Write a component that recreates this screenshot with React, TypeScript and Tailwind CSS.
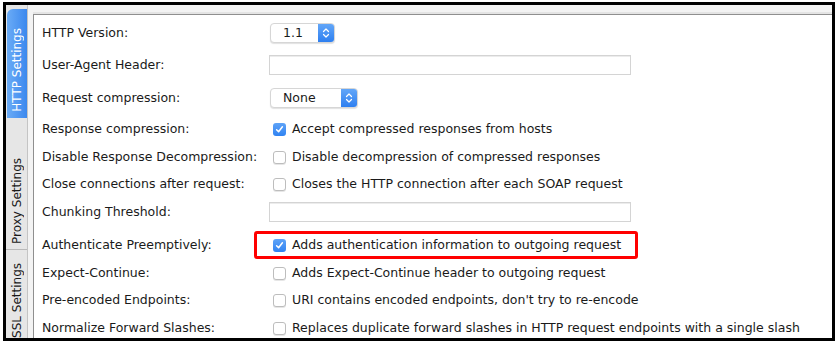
import React from "react";

type Row =
  | { label: string; kind: "select"; value: string; width: string; h: string }
  | { label: string; kind: "field"; h: string }
  | { label: string; kind: "check"; checked: boolean; text: string; h: string; boxed?: boolean };

const rows: Row[] = [
  { label: "HTTP Version:", kind: "select", value: "1.1", width: "w-[65px]", h: "h-[30px]" },
  { label: "User-Agent Header:", kind: "field", h: "h-[34px]" },
  { label: "Request compression:", kind: "select", value: "None", width: "w-[88px]", h: "h-[32px]" },
  { label: "Response compression:", kind: "check", checked: true, text: "Accept compressed responses from hosts", h: "h-[30px]" },
  { label: "Disable Response Decompression:", kind: "check", checked: false, text: "Disable decompression of compressed responses", h: "h-[27px]" },
  { label: "Close connections after request:", kind: "check", checked: false, text: "Closes the HTTP connection after each SOAP request", h: "h-[27px]" },
  { label: "Chunking Threshold:", kind: "field", h: "h-[28px]" },
  { label: "Authenticate Preemptively:", kind: "check", checked: true, text: "Adds authentication information to outgoing request", h: "h-[27px] mt-[6px]", boxed: true },
  { label: "Expect-Continue:", kind: "check", checked: false, text: "Adds Expect-Continue header to outgoing request", h: "h-[28px]" },
  { label: "Pre-encoded Endpoints:", kind: "check", checked: false, text: "URI contains encoded endpoints, don't try to re-encode", h: "h-[27px]" },
  { label: "Normalize Forward Slashes:", kind: "check", checked: false, text: "Replaces duplicate forward slashes in HTTP request endpoints with a single slash", h: "h-[28px]" },
];

function Checkbox({ checked }: { checked: boolean }) {
  if (checked) {
    return (
      <div className="ml-[3px] w-[13px] h-[13px] rounded-[3px] bg-gradient-to-b from-[#5ea3f7] to-[#2f83f2] flex items-center justify-center shrink-0">
        <svg width="9" height="9" viewBox="0 0 9 9">
          <path d="M1.6 4.8 L3.6 6.8 L7.4 1.8" fill="none" stroke="white" strokeWidth="1.5" strokeLinecap="round" strokeLinejoin="round" />
        </svg>
      </div>
    );
  }
  return <div className="ml-[3px] w-[13px] h-[13px] rounded-[3px] bg-white border border-[#bdbdbd] shadow-[0_1px_0_#e6e6e6] shrink-0" />;
}

function Select({ value, width }: { value: string; width: string }) {
  return (
    <div className={`${width} h-[20px] flex rounded-[4px] bg-white border border-[#d6d6d6] shadow-[0_1px_1px_rgba(0,0,0,0.12)] overflow-hidden`}>
      <span className="flex-1 pl-[12px] leading-[18px]">{value}</span>
      <div className="w-[16px] bg-gradient-to-b from-[#62a6f8] to-[#2d7ff0] flex items-center justify-center">
        <svg width="8" height="12" viewBox="0 0 8 12">
          <path d="M1.5 4.5 L4 2 L6.5 4.5 M1.5 7.5 L4 10 L6.5 7.5" fill="none" stroke="white" strokeWidth="1.2" strokeLinecap="round" strokeLinejoin="round" />
        </svg>
      </div>
    </div>
  );
}

export default function App() {
  return (
    <div className="w-[840px] h-[344px] bg-white overflow-hidden text-[12.5px] text-[#1a1a1a] font-['DejaVu_Sans',sans-serif]">
      <div className="mt-[2px] ml-[3px] w-[832px] h-[339px] border-[3px] border-black flex overflow-hidden">
        {/* tab strip */}
        <div className="w-[22px] shrink-0 bg-[#e6e6e6] border-r border-[#c4c4c4] pt-[4px] flex flex-col text-[12px]">
          <div className="ml-[1px] h-[109px] rounded-tl-[6px] bg-gradient-to-r from-[#6aabf6] to-[#3b88ee] text-white flex flex-col justify-end items-center pb-[6px] shrink-0">
            <span className="[writing-mode:vertical-rl] rotate-180 whitespace-nowrap leading-[20px]">HTTP Settings</span>
          </div>
          <div className="h-[132px] border-b border-[#b9b9b9] flex flex-col justify-end items-center pb-[5px] shrink-0">
            <span className="[writing-mode:vertical-rl] rotate-180 whitespace-nowrap leading-[20px]">Proxy Settings</span>
          </div>
          <div className="h-[110px] flex flex-col justify-start items-center pt-[13px] shrink-0">
            <span className="[writing-mode:vertical-rl] rotate-180 whitespace-nowrap leading-[20px]">SSL Settings</span>
          </div>
        </div>

        {/* gap */}
        <div className="flex-1 bg-[#f3f3f3] pl-[5px] pt-[9px] flex">
          <div className="flex-1 bg-white border-l border-t border-[#8f8f8f] shadow-[0_-2px_0_#e4e4e4] pl-[8px] pt-[3px] flex flex-col">
            {rows.map((r, i) => (
              <div key={i} className={`${r.h} relative flex items-center shrink-0`}>
                <div className="w-[228px] shrink-0 whitespace-nowrap">{r.label}</div>
                {r.kind === "select" && <Select value={r.value} width={r.width} />}
                {r.kind === "field" && (
                  <div className="-ml-[1px] w-[362px] h-[20px] border border-[#d4d4d4] bg-white shadow-[inset_0_1px_0_#ececec]" />
                )}
                {r.kind === "check" && (
                  <div className="flex items-center gap-[6px] whitespace-nowrap">
                    <Checkbox checked={r.checked} />
                    <span>{r.text}</span>
                  </div>
                )}
                {r.kind === "check" && r.boxed && (
                  <div className="absolute left-[212px] -top-[1px] w-[384px] h-[28px] border-[3px] border-[#ff0000] rounded-[3px]" />
                )}
              </div>
            ))}
          </div>
        </div>
      </div>
    </div>
  );
}
